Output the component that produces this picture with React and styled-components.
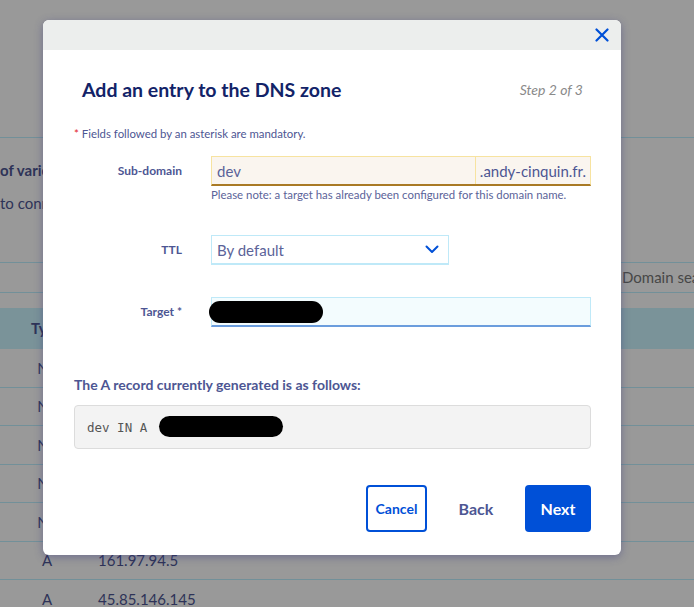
import React from "react";
import styled, { createGlobalStyle } from "styled-components";

const Global = createGlobalStyle`
  html, body {
    margin: 0;
    padding: 0;
    background: #fff;
    font-family: Lato, "Noto Sans", sans-serif;
    overflow: hidden;
  }
`;

const Page = styled.div`
  position: relative;
  width: 694px;
  height: 607px;
  overflow: hidden;
  background: #fff;
  color: #4d5693;
`;

const TopRule = styled.div`
  height: 137px;
  border-bottom: 1px solid #bef1ff;
`;

const Heading = styled.div`
  margin-top: 22px;
  font-size: 15px;
  font-weight: 700;
  line-height: 20px;
  white-space: nowrap;
`;

const Intro = styled.div`
  margin-top: 13px;
  font-size: 15px;
  line-height: 20px;
  white-space: nowrap;
`;

const SearchRow = styled.div`
  display: flex;
  justify-content: flex-end;
  margin-top: 49px;
  border-top: 1px solid #bef1ff;
  border-bottom: 1px solid #bef1ff;
  height: 29px;
`;

const SearchText = styled.div`
  width: 72px;
  padding-left: 2px;
  font-size: 15px;
  line-height: 29px;
  color: #777;
  white-space: nowrap;
  overflow: hidden;
`;

const Table = styled.div`
  margin-top: 15px;
`;

const Row = styled.div`
  display: grid;
  grid-template-columns: 94px 1fr;
  align-items: center;
  height: ${(p) => (p.$head ? "40px" : "37.5px")};
  background: ${(p) => (p.$head ? "#cbf5ff" : "transparent")};
  border-bottom: 1px solid ${(p) => (p.$head ? "transparent" : "#bef1ff")};
  font-size: 15px;
  font-weight: ${(p) => (p.$head ? 700 : 400)};
`;

const Cell = styled.div`
  text-align: ${(p) => (p.$center ? "center" : "left")};
  padding-left: ${(p) => (p.$center ? "0" : "4px")};
`;

const Overlay = styled.div`
  position: absolute;
  inset: 0;
  background: rgba(0, 0, 0, 0.4);
`;

const Modal = styled.div`
  position: absolute;
  left: 43px;
  top: 20px;
  width: 578px;
  height: 535px;
  background: #fff;
  border-radius: 6px;
  overflow: hidden;
  box-shadow: 0 2px 8px rgba(60, 60, 130, 0.45);
  display: flex;
  flex-direction: column;
`;

const TopBar = styled.div`
  height: 30px;
  background: #eceeed;
  display: flex;
  justify-content: flex-end;
  align-items: center;
  padding-right: 10px;
`;

const Close = styled.button`
  border: 0;
  background: none;
  padding: 0;
  width: 18px;
  height: 18px;
  display: flex;
  align-items: center;
  justify-content: center;
  cursor: pointer;
`;

const Body = styled.div`
  padding: 26px 30px 0 31px;
  display: flex;
  flex-direction: column;
`;

const TitleRow = styled.div`
  display: flex;
  justify-content: space-between;
  align-items: center;
  padding: 0 8px;
  height: 26px;
`;

const Title = styled.h2`
  margin: 0;
  font-size: 19.5px;
  font-weight: 700;
  color: #122368;
`;

const Step = styled.span`
  font-size: 14px;
  font-style: italic;
  color: #8a8a8a;
`;

const Mandatory = styled.p`
  margin: 25px 0 0;
  font-size: 11.4px;
  line-height: 14px;
  color: #4d5693;
  & b {
    color: #e2232a;
    font-weight: 400;
  }
`;

const Field = styled.div`
  display: grid;
  grid-template-columns: 108px 1fr;
  column-gap: 29px;
  align-items: start;
  margin-top: ${(p) => p.$mt}px;
`;

const Label = styled.label`
  text-align: right;
  font-size: 12px;
  font-weight: 700;
  color: #4d5693;
  line-height: 30px;
`;

const Control = styled.div`
  display: flex;
  flex-direction: column;
`;

const InputBox = styled.div`
  display: flex;
  align-items: center;
  height: 30px;
  box-sizing: border-box;
  width: ${(p) => p.$w || "100%"};
  background: ${(p) => p.$bg};
  border: 1px solid ${(p) => p.$border};
  border-bottom: 2px solid ${(p) => p.$bottom || p.$border};
  font-size: 15px;
  color: #5b6399;
`;

const InputText = styled.div`
  flex: 1;
  padding-left: 5px;
  position: relative;
  height: 100%;
  display: flex;
  align-items: center;
`;

const Suffix = styled.div`
  padding: 0 4px;
  border-left: 1px solid #f7e3a0;
  height: 100%;
  display: flex;
  align-items: center;
  white-space: nowrap;
  color: #4d5693;
`;

const Help = styled.div`
  margin-top: 2px;
  font-size: 11.4px;
  line-height: 14px;
  color: #5b6399;
  white-space: nowrap;
`;

const Redact = styled.span`
  position: absolute;
  left: ${(p) => p.$l}px;
  top: ${(p) => p.$t}px;
  width: ${(p) => p.$w}px;
  height: ${(p) => p.$h}px;
  background: #000;
  border-radius: 12px;
`;

const RecordTitle = styled.h3`
  margin: 49px 0 0;
  font-size: 14px;
  font-weight: 700;
  color: #4d5693;
  line-height: 18px;
`;

const Code = styled.div`
  position: relative;
  margin-top: 11px;
  height: 44px;
  box-sizing: border-box;
  background: #f3f3f3;
  border: 1px solid #dcdcdc;
  border-radius: 4px;
  padding-left: 12px;
  display: flex;
  align-items: center;
  font-family: "DejaVu Sans Mono", "Liberation Mono", monospace;
  font-size: 12.5px;
  color: #555;
`;

const Actions = styled.div`
  display: flex;
  justify-content: flex-end;
  align-items: center;
  margin-top: 36px;
`;

const Button = styled.button`
  height: 47px;
  box-sizing: border-box;
  border-radius: 4px;
  font-family: Lato, "Noto Sans", sans-serif;
  font-weight: 700;
  cursor: pointer;
  padding: 0;
  ${(p) =>
    p.$variant === "outline" &&
    `
    width: 61px;
    border: 2px solid #0050d7;
    background: #fff;
    color: #0050d7;
    font-size: 14px;
  `}
  ${(p) =>
    p.$variant === "ghost" &&
    `
    width: 98px;
    border: 0;
    background: transparent;
    color: #4d5693;
    font-size: 16px;
  `}
  ${(p) =>
    p.$variant === "primary" &&
    `
    width: 66px;
    border: 0;
    background: #0050d7;
    color: #fff;
    font-size: 16px;
  `}
`;

const rows = [
  ["NS", ""],
  ["NS", ""],
  ["NS", ""],
  ["NS", ""],
  ["NS", ""],
  ["A", "161.97.94.5"],
  ["A", "45.85.146.145"],
];

export default function App() {
  return (
    <Page>
      <Global />
      <TopRule />
      <Heading>of various types</Heading>
      <Intro>to connect your domain</Intro>
      <SearchRow>
        <SearchText>Domain sea</SearchText>
      </SearchRow>
      <Table>
        <Row $head>
          <Cell $center>Type</Cell>
          <Cell>Target</Cell>
        </Row>
        {rows.map((r, i) => (
          <Row key={i}>
            <Cell $center>{r[0]}</Cell>
            <Cell>{r[1]}</Cell>
          </Row>
        ))}
      </Table>

      <Overlay />
      <Modal>
        <TopBar>
          <Close aria-label="Close">
            <svg width="14" height="14" viewBox="0 0 14 14">
              <path d="M1.5 1.5 L12.5 12.5 M12.5 1.5 L1.5 12.5" stroke="#0050d7" strokeWidth="2.2" strokeLinecap="round" />
            </svg>
          </Close>
        </TopBar>
        <Body>
          <TitleRow>
            <Title>Add an entry to the DNS zone</Title>
            <Step>Step 2 of 3</Step>
          </TitleRow>
          <Mandatory>
            <b>*</b> Fields followed by an asterisk are mandatory.
          </Mandatory>

          <Field $mt={15}>
            <Label>Sub-domain</Label>
            <Control>
              <InputBox $bg="#faf5ef" $border="#f7e3a0" $bottom="#a97a25">
                <InputText>dev</InputText>
                <Suffix>.andy-cinquin.fr.</Suffix>
              </InputBox>
              <Help>Please note: a target has already been configured for this domain name.</Help>
            </Control>
          </Field>

          <Field $mt={33}>
            <Label>TTL</Label>
            <Control>
              <InputBox $w="238px" $bg="#fff" $border="#bfe9f8">
                <InputText>By default</InputText>
                <svg width="14" height="9" viewBox="0 0 14 9" style={{ marginRight: 9 }}>
                  <path d="M1.5 1.5 L7 7 L12.5 1.5" fill="none" stroke="#0050d7" strokeWidth="2" strokeLinecap="round" strokeLinejoin="round" />
                </svg>
              </InputBox>
            </Control>
          </Field>

          <Field $mt={32}>
            <Label>Target *</Label>
            <Control>
              <InputBox $bg="#f3fcfe" $border="#bfe9f8" $bottom="#6b9ddd">
                <InputText>
                  <Redact $l={-3} $t={3} $w={114} $h={22} />
                </InputText>
              </InputBox>
            </Control>
          </Field>

          <RecordTitle>The A record currently generated is as follows:</RecordTitle>
          <Code>
            dev IN A
            <Redact $l={84} $t={10} $w={124} $h={21} />
          </Code>

          <Actions>
            <Button $variant="outline">Cancel</Button>
            <Button $variant="ghost">Back</Button>
            <Button $variant="primary">Next</Button>
          </Actions>
        </Body>
      </Modal>
    </Page>
  );
}
